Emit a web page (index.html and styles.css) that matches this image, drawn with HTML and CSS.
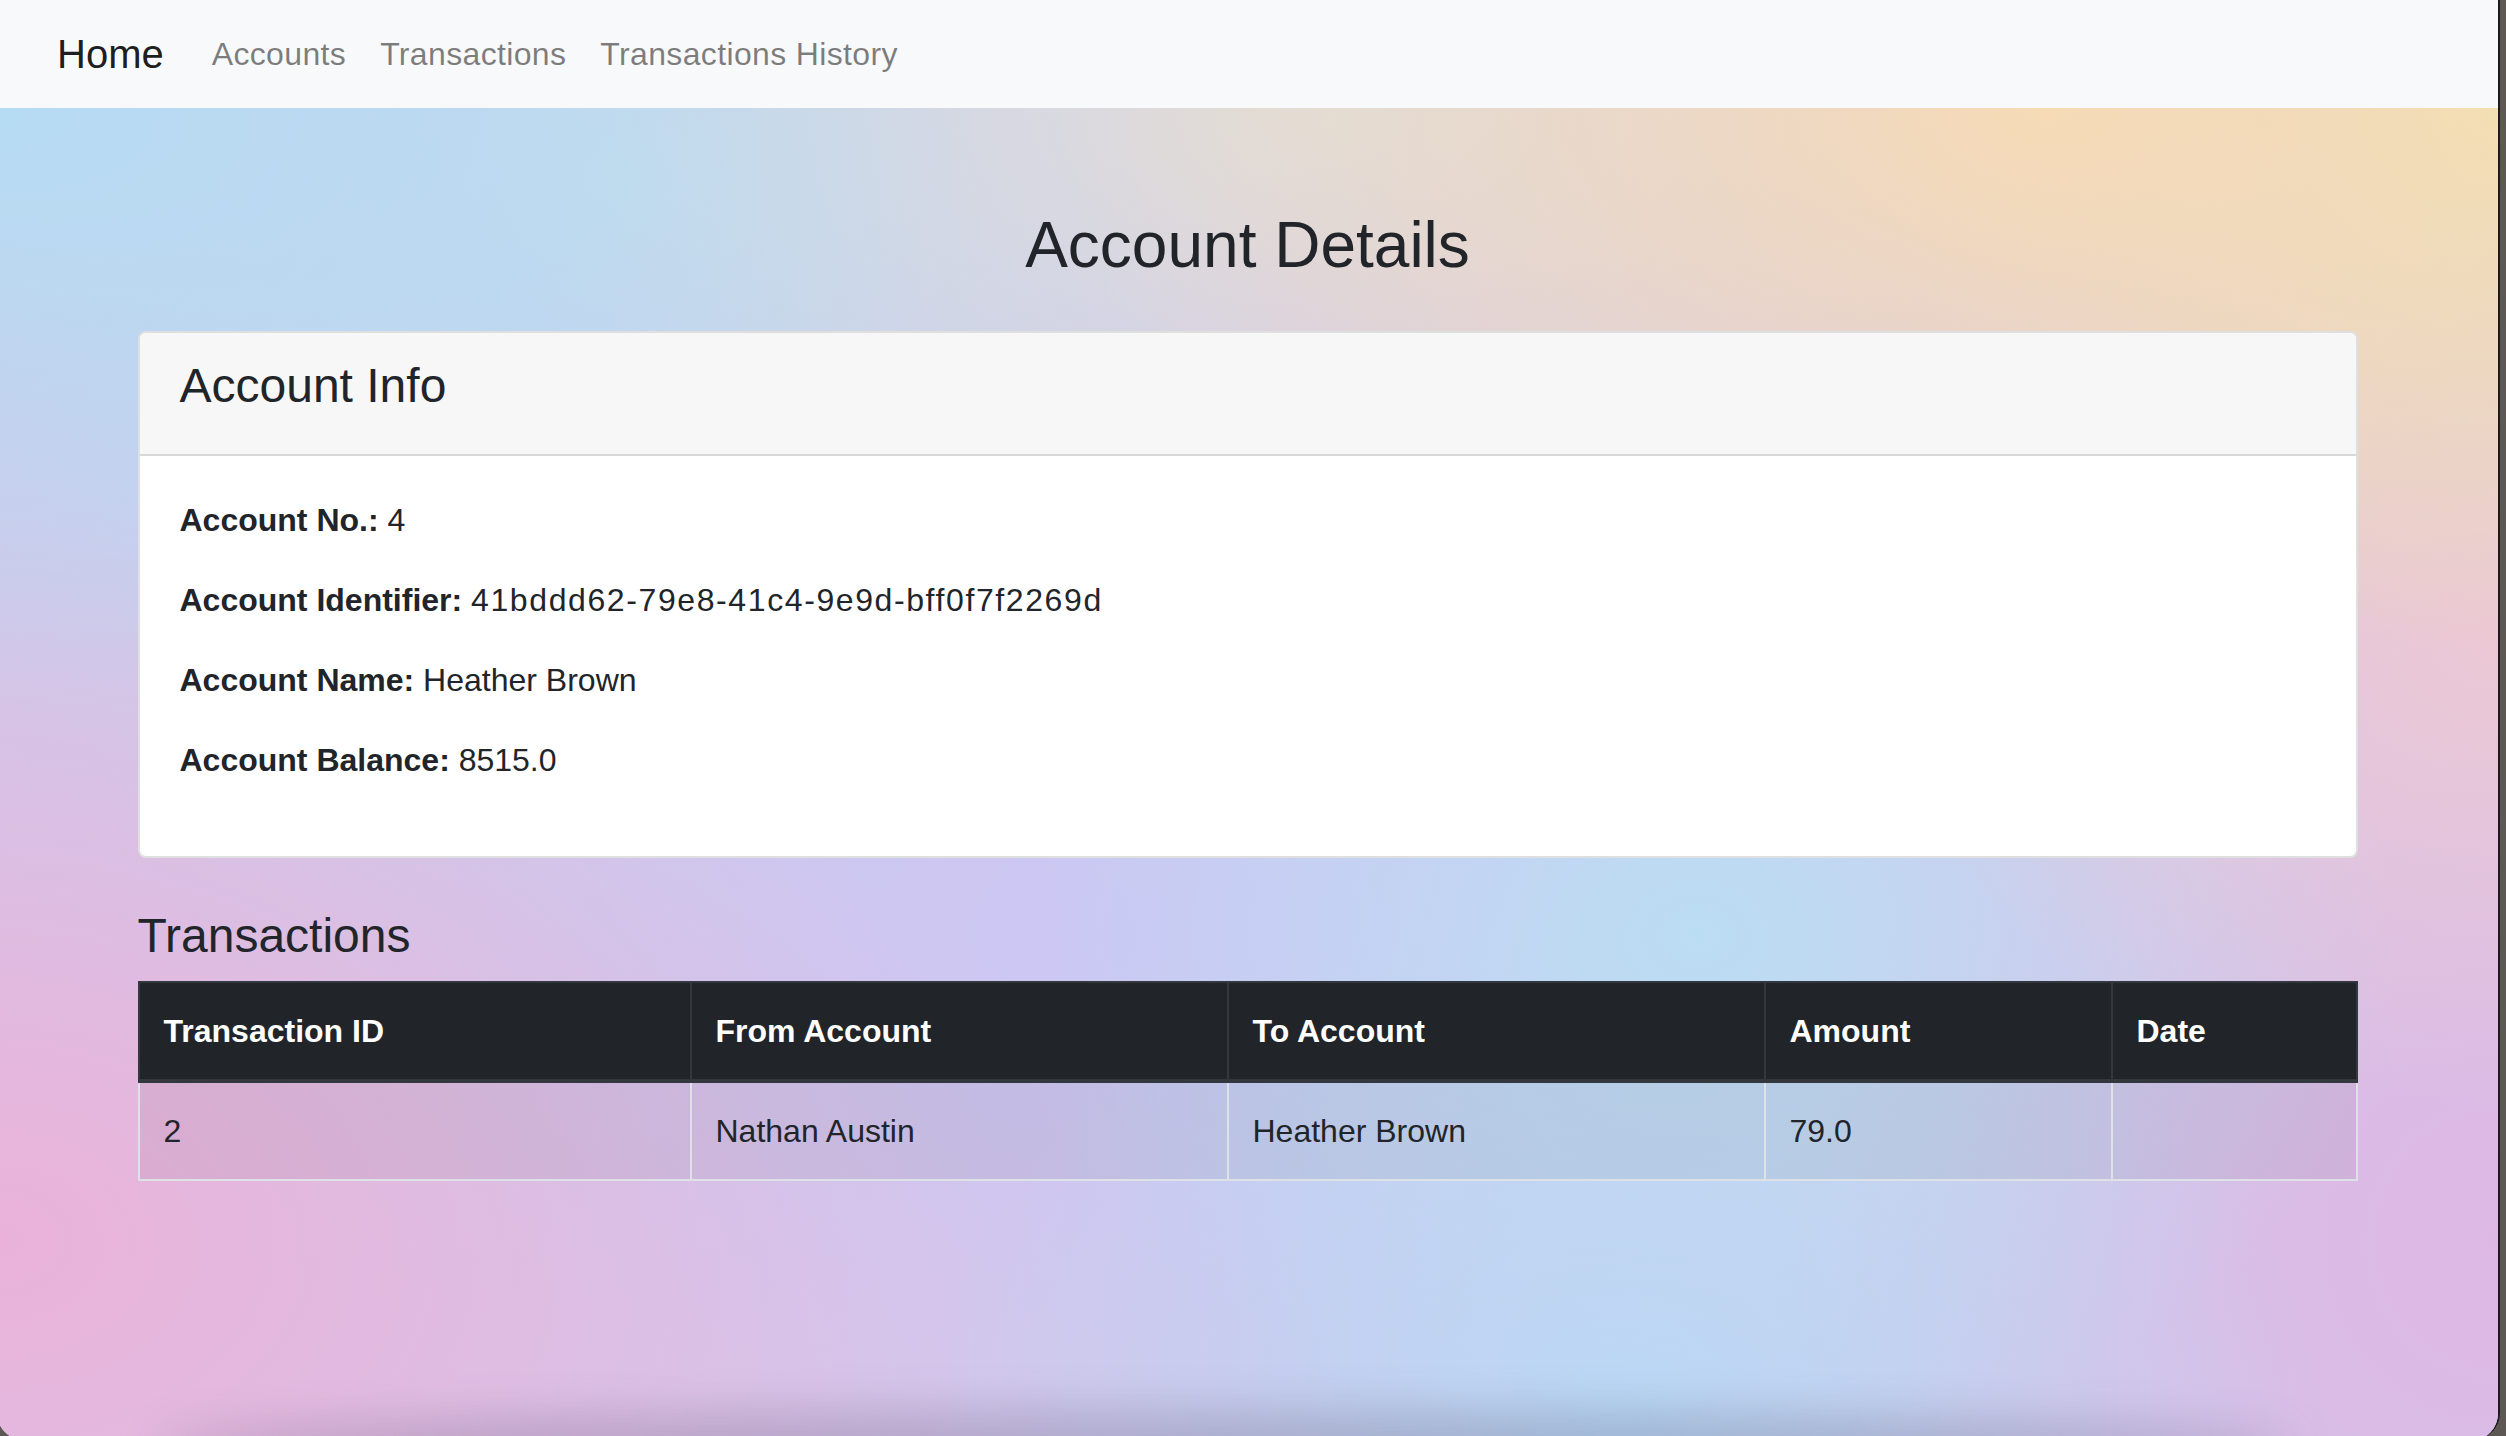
FILE: index.html
```html
<!DOCTYPE html>
<html lang="en">
<head>
<meta charset="utf-8">
<title>Account Details</title>
<link rel="stylesheet" href="styles.css">
</head>
<body>
<div class="window">
  <nav class="navbar">
    <a class="brand" href="#">Home</a>
    <ul class="nav">
      <li><a class="nav-link" href="#">Accounts</a></li>
      <li><a class="nav-link" href="#">Transactions</a></li>
      <li><a class="nav-link" href="#">Transactions History</a></li>
    </ul>
  </nav>
  <main class="page">
    <div class="container">
      <h2 class="title">Account Details</h2>
      <section class="card">
        <div class="card-header"><h4 class="card-title">Account Info</h4></div>
        <div class="card-body">
          <p><strong>Account No.:</strong> 4</p>
          <p><strong>Account Identifier:</strong> <span class="uuid">41bddd62-79e8-41c4-9e9d-bff0f7f2269d</span></p>
          <p><strong>Account Name:</strong> Heather Brown</p>
          <p><strong>Account Balance:</strong> 8515.0</p>
        </div>
      </section>
      <h4 class="section-title">Transactions</h4>
      <table class="table">
        <colgroup>
          <col class="c-id"><col class="c-from"><col class="c-to"><col class="c-amount"><col class="c-date">
        </colgroup>
        <thead>
          <tr><th>Transaction ID</th><th>From Account</th><th>To Account</th><th>Amount</th><th>Date</th></tr>
        </thead>
        <tbody>
          <tr><td>2</td><td>Nathan Austin</td><td>Heather Brown</td><td>79.0</td><td></td></tr>
        </tbody>
      </table>
    </div>
  </main>
</div>
</body>
</html>
```
FILE: styles.css
```css
html, body {
  margin: 0;
  padding: 0;
  height: 100%;
  overflow: hidden;
}
body {
  background: #5d5853;
  font-family: "Liberation Sans", Arial, Helvetica, sans-serif;
  color: #212529;
}
.window {
  position: relative;
  margin-left: -3px;
  width: 2501px;
  height: 1440px;
  border-right: 2px solid #1b1b1b;
  border-radius: 0 0 27px 27px;
  overflow: hidden;
  display: flex;
  flex-direction: column;
  background: #d4c6ea;
}
.navbar {
  flex: 0 0 auto;
  height: 108px;
  box-sizing: border-box;
  padding: 0 60px;
  display: flex;
  align-items: center;
  background: #f8f9fa;
}
.brand {
  font-size: 40px;
  line-height: 60px;
  padding: 10px 0;
  margin-right: 32px;
  color: rgba(0, 0, 0, .9);
  text-decoration: none;
}
.nav {
  list-style: none;
  margin: 0;
  padding: 0;
  display: flex;
}
.nav-link {
  display: block;
  font-size: 32px;
  line-height: 48px;
  padding: 16px 17px;
  letter-spacing: .35px;
  color: rgba(0, 0, 0, .5);
  text-decoration: none;
}
.nav li:first-child .nav-link { padding-left: 16px; }
.page {
  position: relative;
  flex: 1 1 auto;
  background-color: #d5c6ea;
  background-image:
    radial-gradient(40% 45% at 0% 0%, rgba(181, 220, 243, 1), rgba(181, 220, 243, 0)),
    radial-gradient(40% 45% at 82% 0%, rgba(246, 219, 182, 1), rgba(246, 219, 182, 0)),
    radial-gradient(25% 40% at 100% 0%, rgba(239, 227, 176, 1), rgba(239, 227, 176, 0)),
    radial-gradient(35% 35% at 52% 0%, rgba(222, 221, 220, 1), rgba(222, 221, 220, 0)),
    radial-gradient(30% 40% at 25% 5%, rgba(190, 218, 240, 1), rgba(190, 218, 240, 0)),
    radial-gradient(25% 35% at 100% 40%, rgba(236, 200, 212, 1), rgba(236, 200, 212, 0)),
    radial-gradient(40% 55% at 0% 85%, rgba(234, 178, 218, 1), rgba(234, 178, 218, 0)),
    radial-gradient(28% 40% at 68% 62%, rgba(187, 221, 244, 1), rgba(187, 221, 244, 0)),
    radial-gradient(28% 40% at 65% 100%, rgba(184, 216, 245, 1), rgba(184, 216, 245, 0)),
    radial-gradient(28% 55% at 100% 85%, rgba(221, 184, 228, 1), rgba(221, 184, 228, 0)),
    radial-gradient(30% 40% at 45% 62%, rgba(204, 198, 244, 1), rgba(204, 198, 244, 0)),
    radial-gradient(40% 50% at 20% 40%, rgba(200, 206, 236, 1), rgba(200, 206, 236, 0));
}
.page::after {
  content: "";
  position: absolute;
  left: 160px;
  right: 200px;
  bottom: -40px;
  height: 70px;
  border-radius: 50%;
  background: rgba(70, 60, 90, .22);
  filter: blur(22px);
  pointer-events: none;
}
.container {
  width: 2280px;
  box-sizing: border-box;
  padding: 0 30px;
  margin: 0 auto;
}
.title {
  margin: 99px 0 47px;
  font-size: 64px;
  line-height: 1.2;
  font-weight: 500;
  text-align: center;
  color: #212529;
}
.card {
  background: #fff;
  border: 2px solid rgba(0, 0, 0, .125);
  border-radius: 8px;
  overflow: hidden;
}
.card-header {
  background: #f7f7f7;
  padding: 24px 40px;
  border-bottom: 2px solid rgba(0, 0, 0, .125);
}
.card-title {
  margin: 0 0 16px;
  font-size: 48px;
  line-height: 1.2;
  font-weight: 500;
}
.card-body {
  padding: 40px 40px 40px;
}
.card-body p {
  margin: 0 0 32px;
  font-size: 32px;
  line-height: 48px;
}
.card-body strong { font-weight: 700; }
.uuid { letter-spacing: 1.6px; }
.section-title {
  margin: 49px 0 16px;
  font-size: 48px;
  line-height: 1.2;
  font-weight: 500;
}
.table {
  width: 100%;
  border-collapse: collapse;
  table-layout: fixed;
  font-size: 32px;
  line-height: 48px;
}
.c-id { width: 552px; }
.c-from { width: 537px; }
.c-to { width: 537px; }
.c-amount { width: 347px; }
.table th {
  background: #212529;
  color: #fff;
  font-weight: 700;
  text-align: left;
  padding: 24px;
  border: 2px solid #32383e;
  border-bottom-width: 4px;
}
.table td {
  padding: 24px;
  border: 2px solid #dee2e6;
  background: rgba(0, 0, 0, .05);
  color: #212529;
}
```
